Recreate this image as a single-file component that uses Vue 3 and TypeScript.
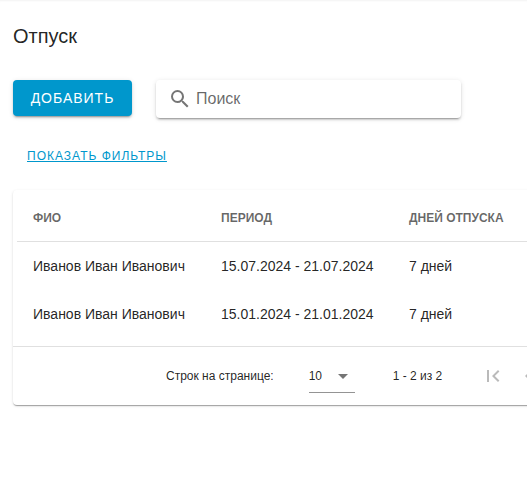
<script setup lang="ts">
import { ref, computed } from 'vue'

interface Vacation {
  id: number
  name: string
  period: string
  days: number
}

const vacations: Vacation[] = [
  { id: 1, name: 'Иванов Иван Иванович', period: '15.07.2024 - 21.07.2024', days: 7 },
  { id: 2, name: 'Иванов Иван Иванович', period: '15.01.2024 - 21.01.2024', days: 7 },
]

const search = ref('')
const perPage = ref(10)

const rows = computed(() =>
  vacations.filter((v) => v.name.toLowerCase().includes(search.value.toLowerCase())),
)
</script>

<template>
  <main class="page">
    <h1 class="title">Отпуск</h1>

    <div class="toolbar">
      <button class="add" type="button">Добавить</button>
      <label class="search">
        <svg class="icon" viewBox="0 0 24 24" aria-hidden="true">
          <path d="M9.5 3A6.5 6.5 0 0 1 16 9.5c0 1.61-.59 3.09-1.56 4.23l.27.27h.79l5 5-1.5 1.5-5-5v-.79l-.27-.27A6.516 6.516 0 0 1 9.5 16 6.5 6.5 0 0 1 3 9.5 6.5 6.5 0 0 1 9.5 3m0 2C7 5 5 7 5 9.5S7 14 9.5 14 14 12 14 9.5 12 5 9.5 5z" />
        </svg>
        <input v-model="search" type="text" placeholder="Поиск" aria-label="Поиск" />
      </label>
    </div>

    <a class="filters" href="#">Показать фильтры</a>

    <section class="card">
      <div class="table-wrap">
        <table>
          <thead>
            <tr>
              <th>ФИО</th>
              <th>Период</th>
              <th>Дней отпуска</th>
            </tr>
          </thead>
          <tbody>
            <tr v-for="row in rows" :key="row.id">
              <td>{{ row.name }}</td>
              <td>{{ row.period }}</td>
              <td>{{ row.days }} дней</td>
            </tr>
          </tbody>
        </table>
      </div>

      <footer class="footer">
        <label for="per-page">Строк на странице:</label>
        <div class="select">
          <select id="per-page" v-model="perPage">
            <option :value="10">10</option>
            <option :value="25">25</option>
            <option :value="50">50</option>
          </select>
          <svg class="icon arrow" viewBox="0 0 24 24" aria-hidden="true">
            <path d="M7 10l5 5 5-5z" />
          </svg>
        </div>
        <span class="range">1 - 2 из 2</span>
        <nav class="pager">
          <button type="button" disabled aria-label="Первая страница">
            <svg class="icon" viewBox="0 0 24 24"><path d="M18.41 16.59L13.82 12l4.59-4.59L17 6l-6 6 6 6zM6 6h2v12H6z" /></svg>
          </button>
          <button type="button" disabled aria-label="Предыдущая страница">
            <svg class="icon" viewBox="0 0 24 24"><path d="M15.41 16.59L10.83 12l4.58-4.59L14 6l-6 6 6 6z" /></svg>
          </button>
        </nav>
      </footer>
    </section>
  </main>
</template>

<style>
body {
  background: #fff;
}
</style>

<style scoped>
.page {
  box-sizing: border-box;
  padding: 20px 0 20px 13px;
  overflow: hidden;
  box-shadow: inset 0 2px 2px -1px rgba(0, 0, 0, 0.05);
  font-family: "Liberation Sans", Arial, sans-serif;
  font-size: 14px;
  color: rgba(0, 0, 0, 0.87);
}

.title {
  margin: 0 0 28px;
  font-size: 20px;
  font-weight: 400;
  line-height: 32px;
}

.toolbar {
  display: flex;
  align-items: flex-start;
  gap: 24px;
}

.add {
  min-width: 119px;
  height: 36px;
  padding: 0 16px;
  border: 0;
  border-radius: 4px;
  background: #0097cc;
  box-shadow: 0 3px 1px -2px rgba(0, 0, 0, 0.2), 0 2px 2px rgba(0, 0, 0, 0.14), 0 1px 5px rgba(0, 0, 0, 0.12);
  color: #fff;
  font: inherit;
  letter-spacing: 1px;
  text-transform: uppercase;
}

.search {
  display: flex;
  align-items: center;
  flex: 0 1 305px;
  box-sizing: border-box;
  height: 38px;
  padding: 0 12px;
  gap: 4px;
  border-radius: 4px;
  background: #fff;
  box-shadow: 0 3px 1px -2px rgba(0, 0, 0, 0.2), 0 2px 2px rgba(0, 0, 0, 0.14), 0 1px 5px rgba(0, 0, 0, 0.12);
}

.search input {
  flex: 1;
  min-width: 0;
  padding: 0;
  border: 0;
  outline: 0;
  background: none;
  color: inherit;
  font: inherit;
  font-size: 16px;
}

.search input::placeholder {
  color: rgba(0, 0, 0, 0.6);
  opacity: 1;
}

.icon {
  display: block;
  flex: none;
  width: 24px;
  height: 24px;
  fill: rgba(0, 0, 0, 0.54);
}

.filters {
  display: block;
  width: max-content;
  margin: 30px 0 26px 14px;
  color: #0097cc;
  font-size: 12px;
  line-height: 16px;
  letter-spacing: 1px;
  text-transform: uppercase;
}

.card {
  min-width: 640px;
  border-radius: 4px;
  background: #fff;
  box-shadow: 0 2px 1px -1px rgba(0, 0, 0, 0.2), 0 1px 1px rgba(0, 0, 0, 0.14), 0 1px 3px rgba(0, 0, 0, 0.12);
}

.table-wrap {
  padding: 4px 4px 8px;
}

table {
  width: 100%;
  border-collapse: separate;
  border-spacing: 0;
  table-layout: fixed;
}

th,
td {
  height: 48px;
  padding: 0 16px;
  text-align: left;
}

th:not(:last-child) {
  width: 156px;
}

th {
  height: 47px;
  border-bottom: 1px solid #e0e0e0;
  color: rgba(0, 0, 0, 0.6);
  font-size: 12px;
  font-weight: 700;
  text-transform: uppercase;
}

.footer {
  display: flex;
  align-items: center;
  height: 58px;
  padding-left: 153px;
  border-top: 1px solid #e0e0e0;
  font-size: 12px;
}

.select {
  display: flex;
  align-items: center;
  position: relative;
  width: 46px;
  height: 32px;
  margin: 0 38px 0 35px;
  border-bottom: 1px solid #949494;
}

.select select {
  width: 100%;
  height: 100%;
  padding: 0;
  border: 0;
  appearance: none;
  background: none;
  color: inherit;
  font: inherit;
}

.arrow {
  position: absolute;
  right: 0;
  pointer-events: none;
}

.pager {
  display: flex;
  margin-left: 33px;
}

.pager button {
  display: flex;
  align-items: center;
  justify-content: center;
  width: 36px;
  height: 36px;
  padding: 0;
  border: 0;
  background: none;
}

.pager .icon {
  fill: rgba(0, 0, 0, 0.27);
}
</style>
